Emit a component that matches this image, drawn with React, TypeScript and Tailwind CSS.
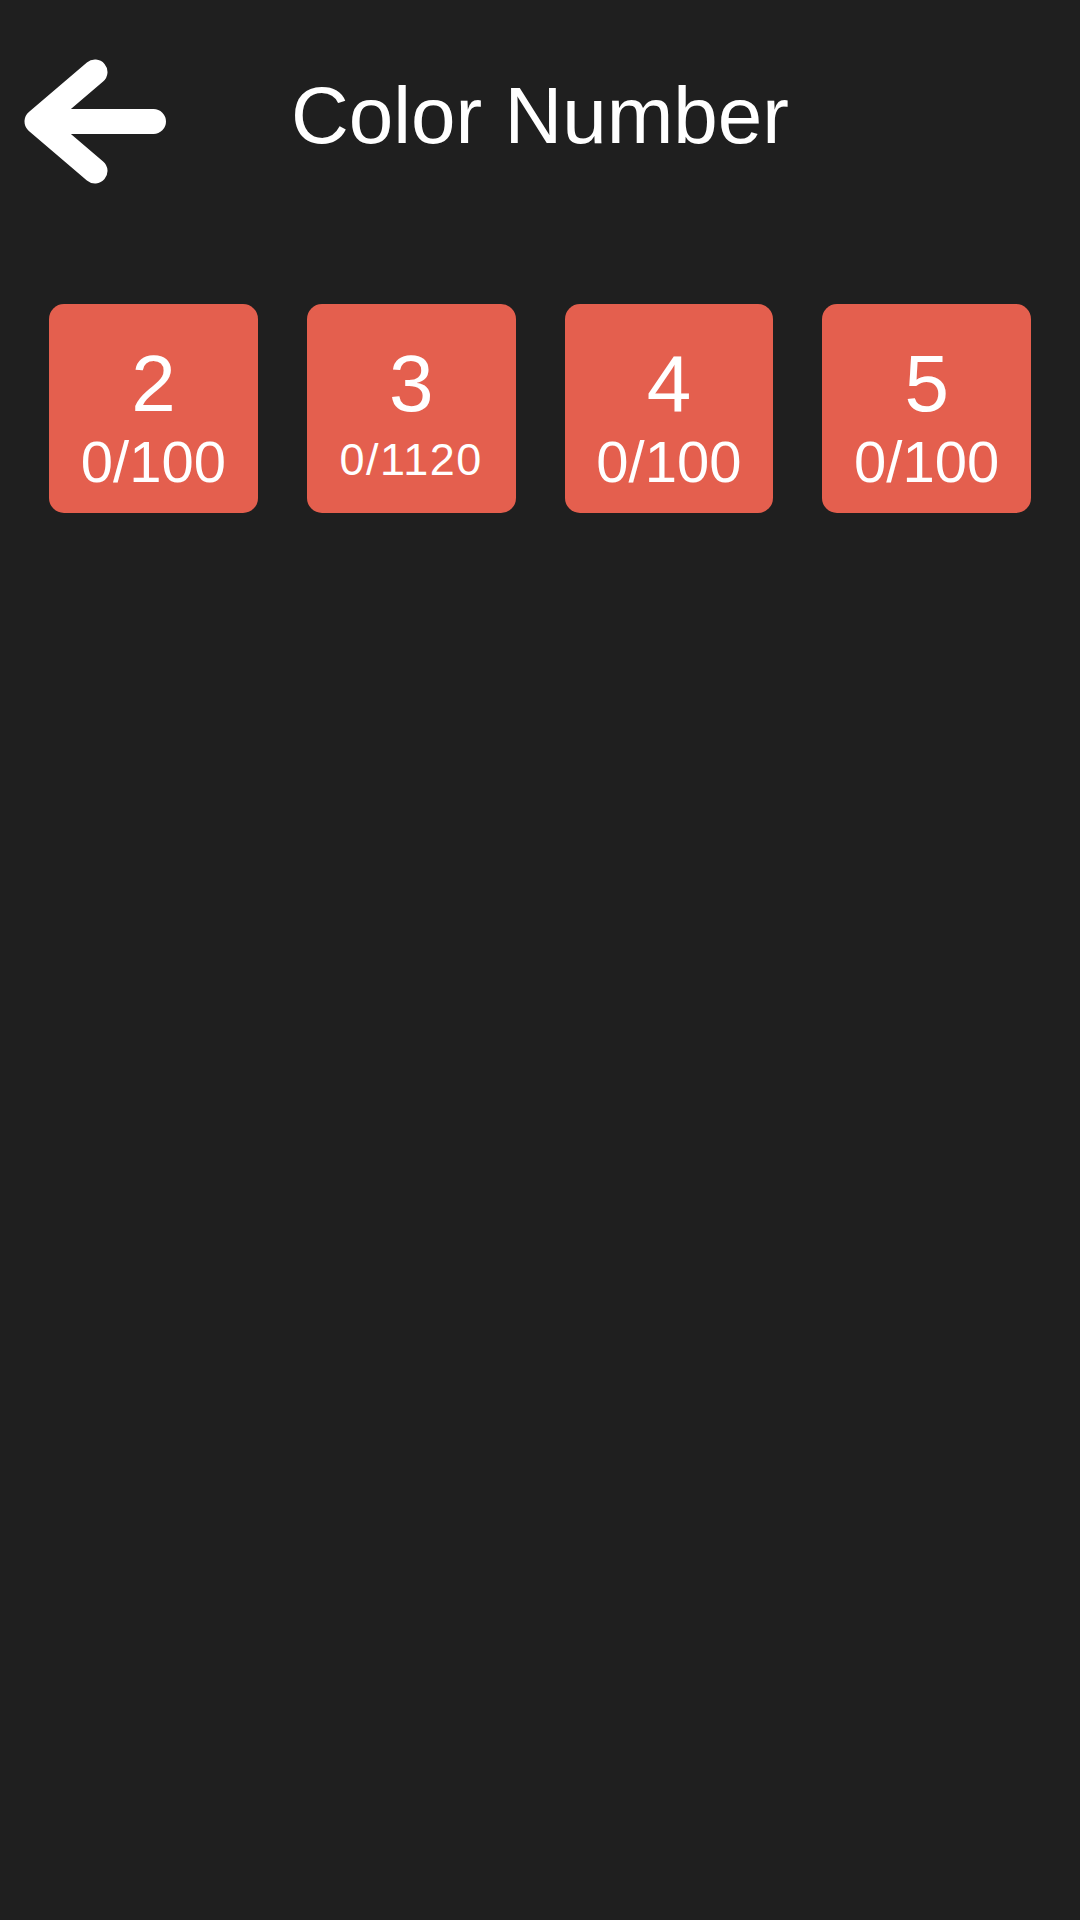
import React from 'react'

interface Level {
  label: string
  progress: string
  small?: boolean
}

const LEVELS: Level[] = [
  { label: '2', progress: '0/100' },
  { label: '3', progress: '0/1120', small: true },
  { label: '4', progress: '0/100' },
  { label: '5', progress: '0/100' },
]

function BackArrow() {
  return (
    <svg width="150" height="140" viewBox="0 0 150 140" className="block ml-[20px]" aria-hidden="true">
      <path
        d="M133.5 65.5 H17 M75 16 L17 65.5 L75 115"
        fill="none"
        stroke="#ffffff"
        strokeWidth="25"
        strokeLinecap="round"
        strokeLinejoin="round"
      />
    </svg>
  )
}

function LevelTile({ level }: { level: Level }) {
  return (
    <button
      type="button"
      className="flex h-[209px] flex-col items-center rounded-[15px] bg-[#e45f4e] pt-[40px] text-white"
    >
      <span className="block text-[80px] leading-none">{level.label}</span>
      {level.small ? (
        <span className="mt-[13px] block text-[45px] leading-none tracking-[1.5px]">{level.progress}</span>
      ) : (
        <span className="mt-[9px] block text-[58px] leading-none">{level.progress}</span>
      )}
    </button>
  )
}

export default function App() {
  return (
    <div className="min-h-[1920px] w-full bg-[#1f1f1f] font-['Liberation_Sans',Arial,sans-serif] text-white">
      <header className="grid grid-cols-[1fr_auto_1fr] items-start pt-[56px]">
        <div>
          <BackArrow />
        </div>
        <h1 className="mt-[20px] text-[80px] font-normal leading-none">Color Number</h1>
        <div />
      </header>

      <main className="mt-[108px] grid grid-cols-4 gap-[49px] px-[49px]">
        {LEVELS.map((level) => (
          <LevelTile key={level.label} level={level} />
        ))}
      </main>
    </div>
  )
}
